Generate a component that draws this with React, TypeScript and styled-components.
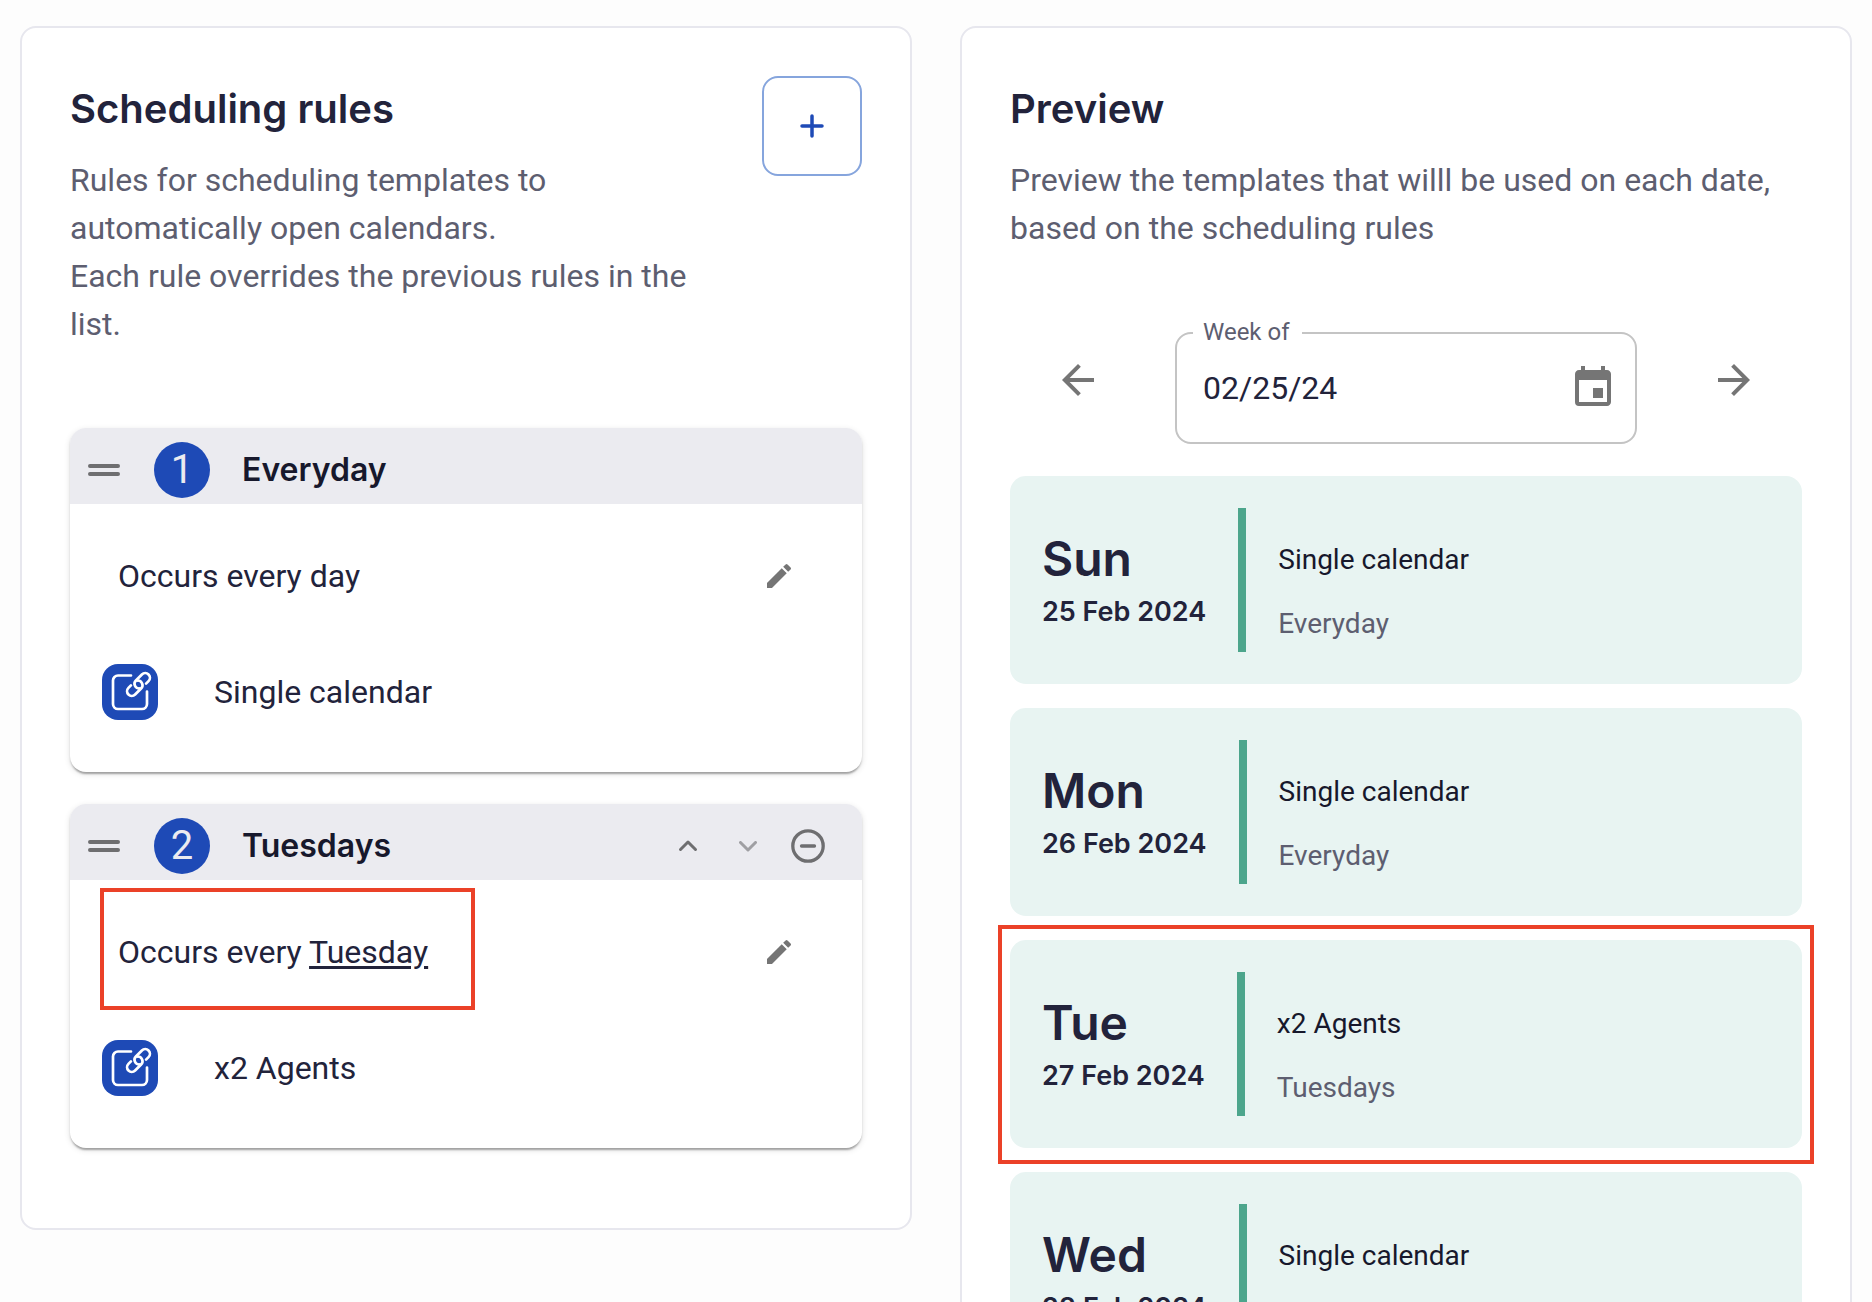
import React, { useState } from "react";
import styled, { createGlobalStyle } from "styled-components";
import { MdArrowBack, MdArrowForward, MdEdit, MdEvent } from "react-icons/md";

const colors = {
  page: "#fdfdfd",
  surface: "#ffffff",
  outline: "#e7e7ee",
  header: "#ebebf0",
  ink: "#22233b",
  inkStrong: "#17182c",
  muted: "#5d5e70",
  blue: "#1e4ab6",
  blueOutline: "#86a5dd",
  icon: "#757575",
  mint: "#e8f4f2",
  green: "#4ca58c",
  mark: "#eb4128",
};

const display = `Inter, "Liberation Sans", sans-serif`;
const text = `Roboto, "Liberation Sans", sans-serif`;

const GlobalStyle = createGlobalStyle`
  *, *::before, *::after { box-sizing: border-box; }
  body {
    margin: 0;
    background: ${colors.page};
    color: ${colors.ink};
    font-family: ${text};
    font-size: 32px;
    line-height: 48px;
  }
  button, input { font: inherit; color: inherit; }
  h1, h2, h3, p, ol, ul { margin: 0; padding: 0; }
  ol, ul { list-style: none; }
`;

const Page = styled.main`
  display: grid;
  grid-template-columns: repeat(2, minmax(0, 1fr));
  align-items: start;
  gap: 48px;
  height: 100vh;
  padding: 26px 20px;
  overflow: hidden;
`;

const Panel = styled.section`
  padding: 48px;
  background: ${colors.surface};
  border: 2px solid ${colors.outline};
  border-radius: 16px;
`;

const PanelHead = styled.header`
  display: flex;
  align-items: flex-start;
  justify-content: space-between;
  gap: 32px;
  margin-bottom: 80px;
`;

const PanelTitle = styled.h2`
  margin-bottom: 14px;
  font-family: ${display};
  font-size: 40px;
  font-weight: 600;
  line-height: 66px;
`;

const PanelText = styled.p`
  color: ${colors.muted};
`;

const AddButton = styled.button`
  display: flex;
  flex: none;
  align-items: center;
  justify-content: center;
  width: 100px;
  height: 100px;
  padding: 0;
  color: ${colors.blue};
  background: none;
  border: 2px solid ${colors.blueOutline};
  border-radius: 16px;
  cursor: pointer;
`;

const IconButton = styled.button<{ $width: number; $height: number }>`
  display: flex;
  flex: none;
  align-items: center;
  justify-content: center;
  width: ${(p) => p.$width}px;
  height: ${(p) => p.$height}px;
  padding: 0;
  color: ${colors.icon};
  background: none;
  border: 0;
  cursor: pointer;

  &:disabled {
    opacity: 0.6;
    cursor: default;
  }
`;

const RuleList = styled.ol`
  display: grid;
  gap: 32px;
  margin-bottom: 32px;
`;

const RuleCard = styled.li`
  overflow: hidden;
  border-radius: 16px;
  box-shadow:
    0 4px 2px -2px rgba(0, 0, 0, 0.2),
    0 2px 2px 0 rgba(0, 0, 0, 0.14),
    0 2px 6px 0 rgba(0, 0, 0, 0.12);
`;

const RuleHeader = styled.div`
  display: flex;
  align-items: center;
  padding: 14px 24px 6px 10px;
  background: ${colors.header};
`;

const RuleNumber = styled.span`
  width: 56px;
  margin: 0 32px 0 26px;
  color: ${colors.header};
  font-size: 40px;
  line-height: 56px;
  text-align: center;
  background: ${colors.blue};
  border-radius: 50%;
`;

const RuleTitle = styled.h3`
  flex: 1;
  color: ${colors.inkStrong};
  font-family: ${display};
  font-size: 32px;
  font-weight: 600;
  line-height: 48px;
`;

const RuleActions = styled.div`
  display: flex;
`;

const RuleBody = styled.div`
  position: relative;
  display: grid;
  gap: 48px;
  padding: 32px 43px 52px 32px;
`;

const Occurrence = styled.div`
  display: flex;
  align-items: center;
  justify-content: space-between;
  padding-left: 16px;
`;

const DayLink = styled.a`
  color: inherit;
  text-underline-offset: 3px;
`;

const TemplateRow = styled.div`
  display: flex;
  align-items: center;
  gap: 56px;
`;

const TemplateButton = styled.button`
  display: flex;
  width: 56px;
  height: 56px;
  padding: 0;
  color: #ffffff;
  background: ${colors.blue};
  border: 0;
  border-radius: 16px;
  cursor: pointer;
`;

const OccurrenceMark = styled.span`
  position: absolute;
  top: 8px;
  left: 30px;
  width: 375px;
  height: 122px;
  border: 4px solid ${colors.mark};
  pointer-events: none;
`;

const DayMark = styled.span`
  position: absolute;
  inset: -15px -12px -16px;
  border: 4px solid ${colors.mark};
  pointer-events: none;
`;

const WeekPicker = styled.div`
  display: flex;
  align-items: flex-start;
  justify-content: space-around;
  margin-bottom: 32px;
`;

const Field = styled.div`
  position: relative;
  display: flex;
  align-items: center;
  width: 462px;
  height: 112px;
  padding: 0 18px 0 26px;
  border: 2px solid #c4c4c4;
  border-radius: 16px;
`;

const FieldLabel = styled.label`
  position: absolute;
  top: -16px;
  left: 16px;
  padding: 0 12px 0 10px;
  color: ${colors.muted};
  font-size: 24px;
  line-height: 28px;
  background: ${colors.surface};
`;

const FieldInput = styled.input`
  flex: 1;
  min-width: 0;
  padding: 0;
  background: none;
  border: 0;
  outline: 0;
`;

const DayList = styled.ul`
  display: grid;
  gap: 24px;
`;

const DayCard = styled.li`
  position: relative;
  display: flex;
  gap: 32px;
  padding: 32px;
  font-size: 28px;
  line-height: 40px;
  background: ${colors.mint};
  border-radius: 16px;
`;

const DayDate = styled.div`
  align-self: center;
  font-family: ${display};
  font-weight: 600;
`;

const DayName = styled.h3`
  font-size: 48px;
  font-weight: 600;
  line-height: 64px;
`;

const DayNumber = styled.p`
  font-size: 27px;
  line-height: 42px;
`;

const DayBar = styled.span`
  flex: none;
  width: 8px;
  height: 144px;
  background: ${colors.green};
`;

const DayInfo = styled.div`
  display: grid;
  align-content: start;
  gap: 24px;
  padding-top: 32px;
  color: ${colors.inkStrong};
`;

const DayRule = styled.p`
  color: ${colors.muted};
`;

const PlusIcon = () => (
  <svg width="24" height="24" viewBox="0 0 24 24" fill="none" stroke="currentColor" strokeWidth="3.500" strokeLinecap="round" aria-hidden="true">
    <path d="M12 2v20M2 12h20" />
  </svg>
);

const HandleIcon = () => (
  <svg width="48" height="48" viewBox="0 0 24 24" fill="none" stroke="#6e6e70" strokeWidth="2" strokeLinecap="round" aria-hidden="true">
    <path d="M5 10h14M5 14h14" />
  </svg>
);

const ChevronIcon = ({ down = false }: { down?: boolean }) => (
  <svg width="24" height="24" viewBox="0 0 24 24" fill="none" stroke="#6e6e70" strokeWidth="3" strokeLinecap="round" strokeLinejoin="round" aria-hidden="true">
    <path d={down ? "M4.500 8.500l7.500 7.500 7.500-7.500" : "M4.500 15.500l7.500-7.500 7.500 7.500"} />
  </svg>
);

const MinusCircleIcon = () => (
  <svg width="40" height="40" viewBox="0 0 40 40" fill="none" stroke="#6e6e70" strokeWidth="3.300" strokeLinecap="round" aria-hidden="true">
    <circle cx="20" cy="20" r="15.200" />
    <path d="M13.500 20h13" />
  </svg>
);

const TemplateIcon = () => (
  <svg width="56" height="56" viewBox="0 0 56 56" fill="none" stroke="currentColor" strokeWidth="2.700" strokeLinecap="round" strokeLinejoin="round" aria-hidden="true">
    <path d="M29 11.500H16a5 5 0 0 0-5 5V40a5 5 0 0 0 5 5h24a5 5 0 0 0 5-5V27.500" />
    <g transform="translate(36.500 20.500) rotate(-45)">
      <path d="M6 4.700H9.500a4.700 4.700 0 0 0 0-9.400H1a4.700 4.700 0 0 0-3 8.300" />
      <path d="M-6-4.700H-9.500a4.700 4.700 0 0 0 0 9.400H-1a4.700 4.700 0 0 0 3-8.300" />
    </g>
  </svg>
);

type Rule = {
  title: string;
  occurs: string;
  day?: string;
  template: string;
  movable?: boolean;
};

const rules: Rule[] = [
  { title: "Everyday", occurs: "Occurs every day", template: "Single calendar" },
  { title: "Tuesdays", occurs: "Occurs every ", day: "Tuesday", template: "x2 Agents", movable: true },
];

const days = [
  { name: "Sun", date: "25 Feb 2024", template: "Single calendar", rule: "Everyday" },
  { name: "Mon", date: "26 Feb 2024", template: "Single calendar", rule: "Everyday" },
  { name: "Tue", date: "27 Feb 2024", template: "x2 Agents", rule: "Tuesdays", marked: true },
  { name: "Wed", date: "28 Feb 2024", template: "Single calendar", rule: "Everyday" },
];

export default function App() {
  const [week, setWeek] = useState("02/25/24");

  return (
    <>
      <GlobalStyle />
      <Page>
        <Panel>
          <PanelHead>
            <div>
              <PanelTitle>Scheduling rules</PanelTitle>
              <PanelText>
                Rules for scheduling templates to automatically open calendars.
                <br />
                Each rule overrides the previous rules in the list.
              </PanelText>
            </div>
            <AddButton type="button" aria-label="Add rule">
              <PlusIcon />
            </AddButton>
          </PanelHead>
          <RuleList>
            {rules.map((rule, index) => (
              <RuleCard key={rule.title}>
                <RuleHeader>
                  <HandleIcon />
                  <RuleNumber>{index + 1}</RuleNumber>
                  <RuleTitle>{rule.title}</RuleTitle>
                  {rule.movable && (
                    <RuleActions>
                      <IconButton type="button" $width={60} $height={56} aria-label="Move up">
                        <ChevronIcon />
                      </IconButton>
                      <IconButton type="button" $width={60} $height={56} aria-label="Move down" disabled>
                        <ChevronIcon down />
                      </IconButton>
                      <IconButton type="button" $width={60} $height={56} aria-label="Remove rule">
                        <MinusCircleIcon />
                      </IconButton>
                    </RuleActions>
                  )}
                </RuleHeader>
                <RuleBody>
                  <Occurrence>
                    <p>
                      {rule.occurs}
                      {rule.day && <DayLink href="#day">{rule.day}</DayLink>}
                    </p>
                    <IconButton type="button" $width={80} $height={80} aria-label="Edit occurrence">
                      <MdEdit size={32} />
                    </IconButton>
                  </Occurrence>
                  <TemplateRow>
                    <TemplateButton type="button" aria-label="Open template">
                      <TemplateIcon />
                    </TemplateButton>
                    <p>{rule.template}</p>
                  </TemplateRow>
                  {rule.day && <OccurrenceMark />}
                </RuleBody>
              </RuleCard>
            ))}
          </RuleList>
        </Panel>

        <Panel>
          <PanelHead>
            <div>
              <PanelTitle>Preview</PanelTitle>
              <PanelText>
                Preview the templates that willl be used on each date, based on the scheduling rules
              </PanelText>
            </div>
          </PanelHead>
          <WeekPicker>
            <IconButton type="button" $width={80} $height={96} aria-label="Previous week">
              <MdArrowBack size={48} />
            </IconButton>
            <Field>
              <FieldLabel htmlFor="week">Week of</FieldLabel>
              <FieldInput id="week" type="text" value={week} onChange={(e) => setWeek(e.target.value)} />
              <IconButton type="button" $width={48} $height={48} aria-label="Choose date">
                <MdEvent size={48} />
              </IconButton>
            </Field>
            <IconButton type="button" $width={80} $height={96} aria-label="Next week">
              <MdArrowForward size={48} />
            </IconButton>
          </WeekPicker>
          <DayList>
            {days.map((day) => (
              <DayCard key={day.name}>
                <DayDate>
                  <DayName>{day.name}</DayName>
                  <DayNumber>{day.date}</DayNumber>
                </DayDate>
                <DayBar />
                <DayInfo>
                  <p>{day.template}</p>
                  <DayRule>{day.rule}</DayRule>
                </DayInfo>
                {day.marked && <DayMark />}
              </DayCard>
            ))}
          </DayList>
        </Panel>
      </Page>
    </>
  );
}
